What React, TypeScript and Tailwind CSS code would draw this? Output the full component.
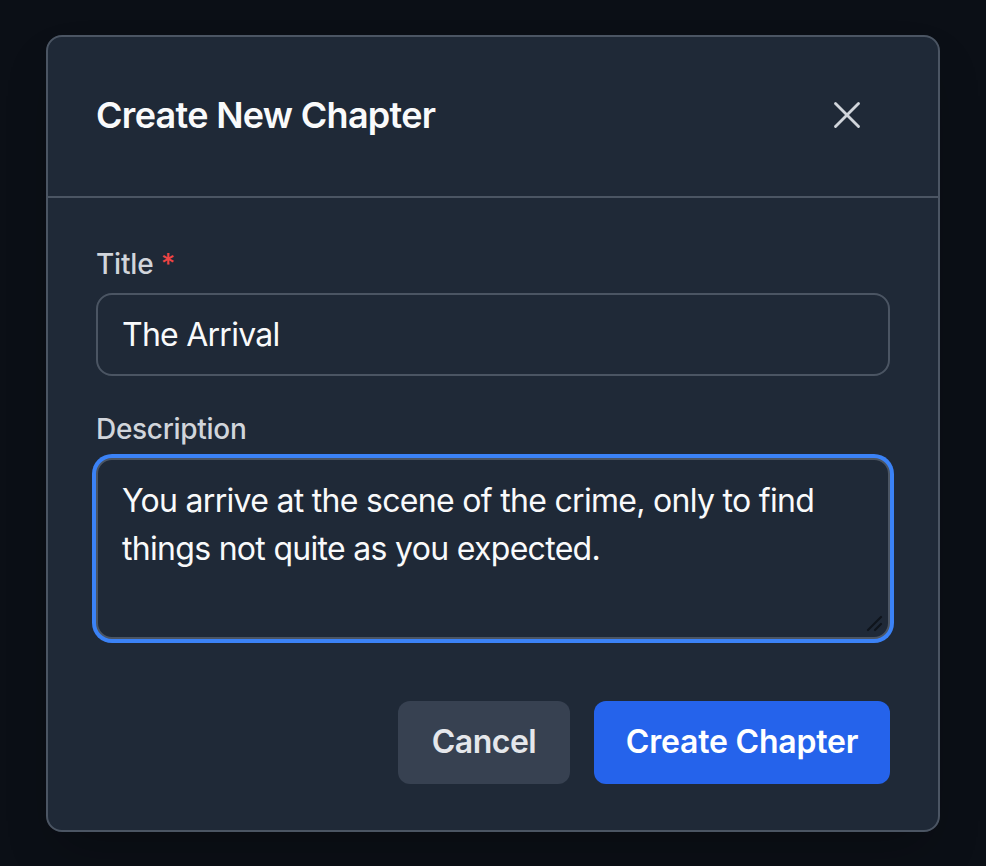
import React from "react";
import { X } from "lucide-react";

const font = { fontFamily: "Inter, 'Noto Sans', sans-serif" };

const ResizeGrip = () => (
  <svg width="18" height="18" viewBox="0 0 18 18" className="pointer-events-none absolute bottom-[6px] right-[6px]">
    <line x1="2" y1="15" x2="15" y2="2" stroke="#0f141c" strokeWidth="2.2" strokeLinecap="round" />
    <line x1="9" y1="15" x2="15" y2="9" stroke="#0f141c" strokeWidth="2.2" strokeLinecap="round" />
  </svg>
);

const NewChapterModal = () => {
  return (
    <div className="w-[894px] h-[797px] bg-[#1f2937] border-2 border-[#4b5563] rounded-[16px] shadow-2xl flex flex-col">
      <div className="h-[161px] flex items-center justify-between pl-[48px] pr-[68px] pb-[3px] border-b-2 border-[#4b5563]">
        <h2 className="text-[36px] font-semibold text-[#f9fafb] tracking-[-0.7px]">Create New Chapter</h2>
        <button type="button" className="text-[#d1d5db]">
          <X size={46} strokeWidth={1.5} />
        </button>
      </div>

      <form className="flex flex-col px-[48px] pt-[46px]">
        <label className="text-[28px] leading-[40px] font-medium text-[#d1d5db] tracking-[-0.2px]">
          Title <span className="text-[#ef4444]">*</span>
        </label>
        <input
          type="text"
          defaultValue="The Arrival"
          className="mt-[9px] h-[83px] px-[24px] rounded-[16px] border-2 border-[#4b5563] bg-[#1f2937] text-[32px] tracking-[-0.75px] text-[#f9fafb] outline-none"
        />

        <label className="mt-[33px] text-[28px] leading-[40px] font-medium text-[#d1d5db] tracking-[-0.3px]">
          Description
        </label>
        <div className="relative mt-[9px]">
          <textarea
            defaultValue="You arrive at the scene of the crime, only to find things not quite as you expected."
            className="block w-full h-[181px] px-[24px] py-[17px] rounded-[16px] border-2 border-[#4b5563] bg-[#1f2937] text-[32px] leading-[48px] tracking-[-0.7px] text-[#f9fafb] outline-none ring-4 ring-[#3b82f6] resize-none"
          />
          <ResizeGrip />
        </div>

        <div className="mt-[62px] flex justify-end gap-[24px]">
          <button
            type="button"
            className="h-[83px] w-[172px] rounded-[12px] bg-[#374151] text-[32px] font-semibold tracking-[-0.5px] text-[#e5e7eb]"
          >
            Cancel
          </button>
          <button
            type="submit"
            className="h-[83px] w-[296px] rounded-[12px] bg-[#2563eb] text-[32px] font-semibold tracking-[-0.2px] text-white"
          >
            Create Chapter
          </button>
        </div>
      </form>
    </div>
  );
};

export default function App() {
  return (
    <div className="w-[986px] h-[866px] bg-[#0b0f16] flex items-center justify-center" style={font}>
      <NewChapterModal />
    </div>
  );
}
